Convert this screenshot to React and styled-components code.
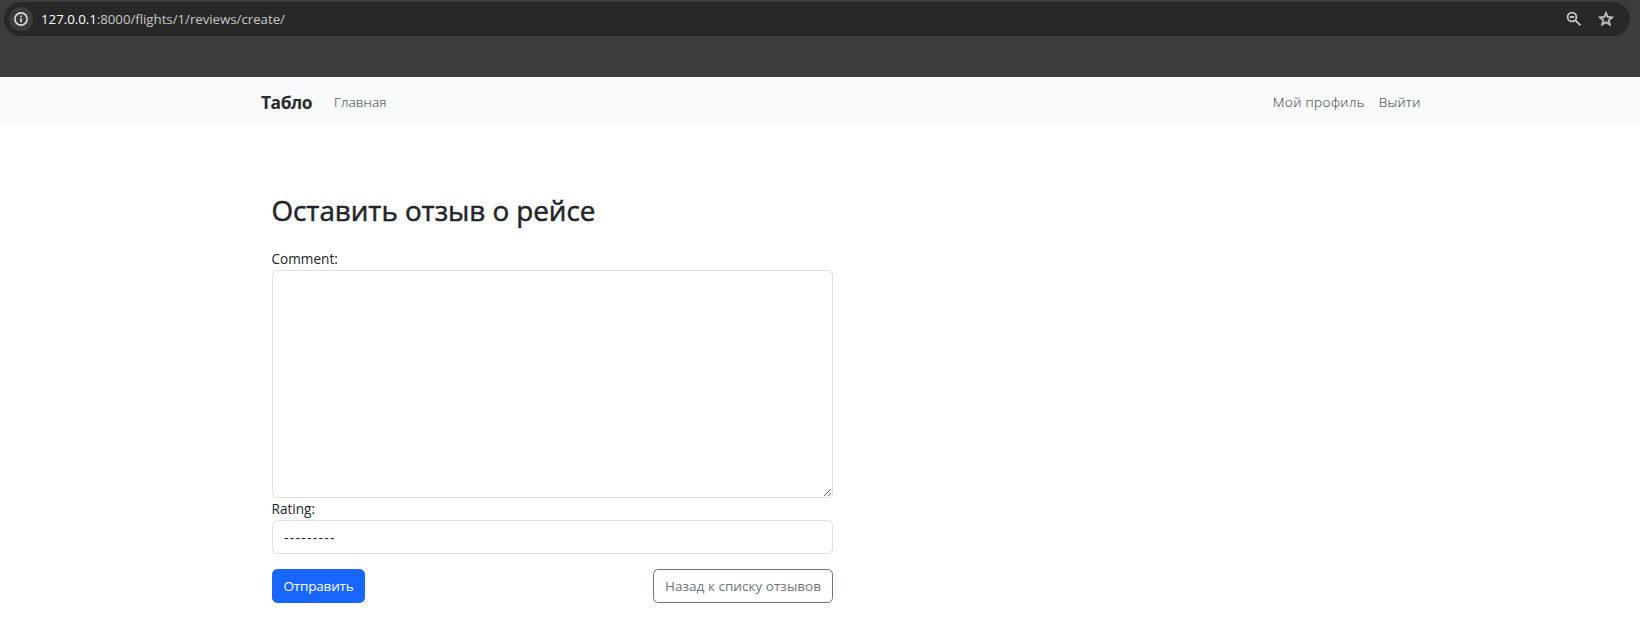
import React from "react";
import styled, { createGlobalStyle } from "styled-components";

const GlobalStyle = createGlobalStyle`
  *, *::before, *::after { box-sizing: border-box; }
  body {
    margin: 0;
    background: #fff;
    color: #212529;
    font-family: "Open Sans", "Noto Sans", sans-serif;
    font-size: 14px;
    line-height: 22px;
  }
`;

const BrowserChrome = styled.header`
  height: 77px;
  padding: 2px 10px 0 4px;
  background: #3c3c3c;
`;

const AddressBar = styled.div`
  display: flex;
  align-items: center;
  height: 34px;
  padding: 0 15px 0 5px;
  border-radius: 17px;
  background: #282828;
`;

const InfoBadge = styled.span`
  display: flex;
  align-items: center;
  justify-content: center;
  width: 24px;
  height: 24px;
  border-radius: 50%;
  background: #3c3c3c;
`;

const Url = styled.span`
  flex: 1;
  margin-left: 8px;
  color: #c7c7c7;
  font-size: 13.3px;
  line-height: 20px;
  letter-spacing: -0.04px;
`;

const Host = styled.span`
  color: #fff;
`;

const BarIcons = styled.span`
  display: flex;
  align-items: center;
  gap: 15px;
`;

const Navbar = styled.nav`
  height: 50px;
  background: #f8fafc;
`;

const NavInner = styled.div`
  display: flex;
  align-items: center;
  width: 1159.5px;
  height: 50px;
  margin-left: 261px;
`;

const Brand = styled.a`
  width: 73px;
  color: #2b2d30;
  font-size: 17.4px;
  font-weight: 700;
  letter-spacing: -0.45px;
`;

const NavLink = styled.a`
  color: #303336;
  font-size: 13.6px;
  font-weight: 300;
  letter-spacing: ${(p) => p.$spacing};
`;

const UserLinks = styled.div`
  display: flex;
  gap: 14px;
  margin-left: auto;
`;

const Page = styled.main`
  width: 561px;
  margin: 65px 0 0 272px;
`;

const Title = styled.h1`
  margin: 0 0 20px -0.5px;
  font-size: 27.8px;
  font-weight: 400;
  line-height: 36px;
  letter-spacing: -0.04px;
  white-space: nowrap;
  -webkit-text-stroke: 0.5px currentColor;
`;

const Label = styled.label`
  display: block;
  height: 22px;
  margin-left: -0.5px;
  font-size: 13.6px;
  line-height: 22px;
`;

const CommentBox = styled.textarea`
  display: block;
  width: 561px;
  height: 228px;
  padding: 5px 11px;
  border: 1px solid #dee2e6;
  border-radius: 5.4px;
  background: #fff;
  outline: none;
  resize: vertical;
`;

const RatingField = styled.div`
  height: 34px;
  padding: 0 11px;
  border: 1px solid #dee2e6;
  border-radius: 5.4px;
  line-height: 34px;
  letter-spacing: 1.24px;
`;

const Actions = styled.div`
  display: flex;
  justify-content: space-between;
  margin-top: 15px;
`;

const Button = styled.button`
  width: ${(p) => p.$width};
  height: 34px;
  padding: 0 0 1px;
  border: 1px solid ${(p) => (p.$primary ? "#1966ff" : "#6c757d")};
  border-radius: 5.4px;
  background: ${(p) => (p.$primary ? "#1966ff" : "#fff")};
  color: ${(p) => (p.$primary ? "#fff" : "#6c757d")};
  font-family: inherit;
  font-size: 13.5px;
  letter-spacing: ${(p) => p.$spacing};
  white-space: nowrap;
`;

const InfoIcon = () => (
  <svg width="14" height="14" viewBox="0 0 14 14" fill="none" stroke="#e0e0e0">
    <circle cx="7" cy="7" r="6.1" strokeWidth="1.6" />
    <path d="M7 6.2v4M7 3.6v1.6" strokeWidth="1.6" />
  </svg>
);

const ZoomOutIcon = () => (
  <svg width="16" height="16" viewBox="0 0 16 16" fill="none" stroke="#c7c7c7" strokeWidth="1.8">
    <circle cx="6" cy="6" r="4.4" />
    <path d="M9.2 9.2l5.2 5.2M3.8 6h4.4" />
  </svg>
);

const StarIcon = () => (
  <svg width="18" height="18" viewBox="0 0 24 24" fill="#c7c7c7">
    <path d="M22 9.24l-7.19-.62L12 2 9.19 8.63 2 9.24l5.46 4.73L5.82 21 12 17.27 18.18 21l-1.63-7.03L22 9.24zM12 15.4l-3.76 2.27 1-4.28-3.32-2.88 4.38-.38L12 6.1l1.71 4.04 4.38.38-3.32 2.88 1 4.28L12 15.4z" stroke="#c7c7c7" strokeWidth=".9" />
  </svg>
);

export default function App() {
  return (
    <>
      <GlobalStyle />
      <BrowserChrome>
        <AddressBar>
          <InfoBadge><InfoIcon /></InfoBadge>
          <Url><Host>127.0.0.1</Host>:8000/flights/1/reviews/create/</Url>
          <BarIcons><ZoomOutIcon /><StarIcon /></BarIcons>
        </AddressBar>
      </BrowserChrome>
      <Navbar>
        <NavInner>
          <Brand>Табло</Brand>
          <NavLink $spacing="0.1px">Главная</NavLink>
          <UserLinks>
            <NavLink $spacing="0.36px">Мой профиль</NavLink>
            <NavLink $spacing="0.2px">Выйти</NavLink>
          </UserLinks>
        </NavInner>
      </Navbar>
      <Page>
        <Title>Оставить отзыв о рейсе</Title>
        <Label htmlFor="comment">Comment:</Label>
        <CommentBox id="comment" />
        <Label>Rating:</Label>
        <RatingField>---------</RatingField>
        <Actions>
          <Button $primary $width="93px" $spacing="-0.16px">Отправить</Button>
          <Button $width="180px" $spacing="0.03px">Назад к списку отзывов</Button>
        </Actions>
      </Page>
    </>
  );
}
